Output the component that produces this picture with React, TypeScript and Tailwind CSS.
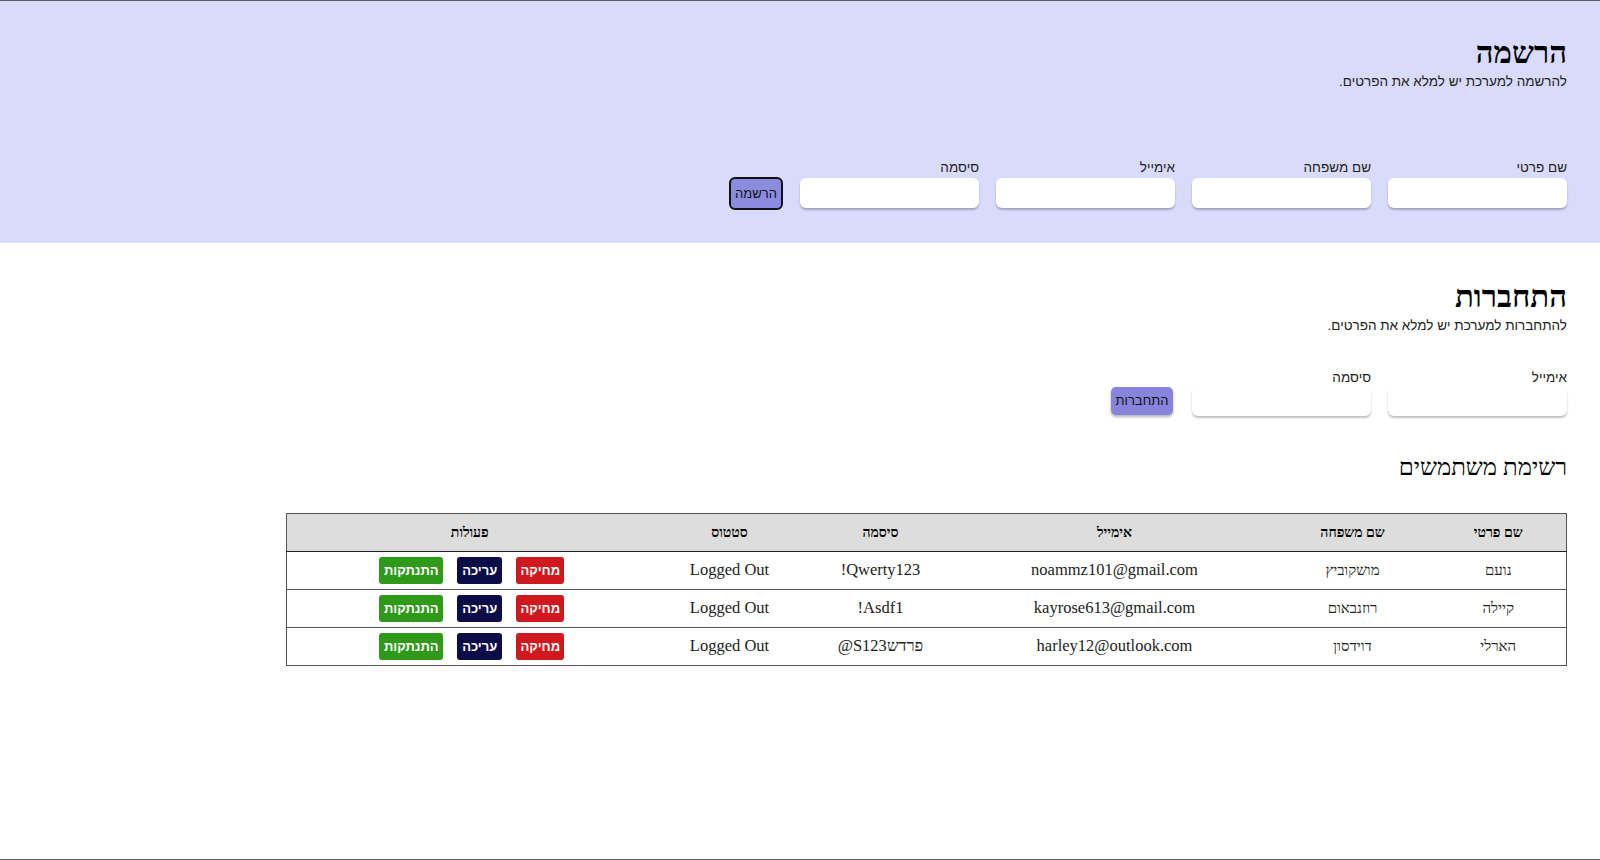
import React from "react";

const serif = "font-['Liberation_Serif','Times_New_Roman',serif]";
const sans = "font-['Liberation_Sans',Arial,sans-serif]";

function Field({ label, tight }: { label: string; tight?: boolean }) {
  return (
    <div className="flex flex-col w-[179px]">
      <label className={`${sans} text-[13.5px] leading-[16px] text-[#222] ${tight ? "mb-0" : "mb-[2px]"}`}>{label}</label>
      <input className="h-[30px] w-full rounded-[6px] bg-white shadow-[0_2px_2px_rgba(0,0,0,0.25)] outline-none border-0" />
    </div>
  );
}

const users = [
  { first: "נועם", last: "מושקוביץ", email: "noammz101@gmail.com", pass: "Qwerty123!", status: "Logged Out" },
  { first: "קיילה", last: "רוזנבאום", email: "kayrose613@gmail.com", pass: "Asdf1!", status: "Logged Out" },
  { first: "הארלי", last: "דוידסון", email: "harley12@outlook.com", pass: "פרדשS123@", status: "Logged Out" },
];

export default function App() {
  return (
    <div dir="rtl" className={`${serif} h-[860px] border-t border-b border-[#5f5f5f] bg-white text-black overflow-hidden`}>
      <section className="bg-[#d9dbfd] h-[242px] px-[33px] pt-[34px]">
        <h1 className={`${serif} text-[31px] leading-[36px] font-bold`}>הרשמה</h1>
        <p className={`${sans} text-[13.5px] leading-[18px] text-[#222] mt-[2px]`}>להרשמה למערכת יש למלא את הפרטים.</p>
        <div className="flex items-end gap-[17px] mt-[69px]">
          <Field label="שם פרטי" />
          <Field label="שם משפחה" />
          <Field label="אימייל" />
          <Field label="סיסמה" />
          <button className={`${sans} h-[33px] w-[54px] rounded-[6px] border-2 border-[#111] bg-[#8b8be0] text-[13px] text-[#111] mb-[-2px]`}>
            הרשמה
          </button>
        </div>
      </section>

      <section className="px-[33px] pt-[36px]">
        <h1 className={`${serif} text-[31px] leading-[36px] font-bold`}>התחברות</h1>
        <p className={`${sans} text-[13.5px] leading-[18px] text-[#222] mt-[2px]`}>להתחברות למערכת יש למלא את הפרטים.</p>
        <div className="flex items-end gap-[17px] mt-[35px]">
          <Field label="אימייל" tight />
          <Field label="סיסמה" tight />
          <button className={`${sans} h-[28px] w-[62px] rounded-[5px] bg-[#8884dc] text-[13px] text-[#111] shadow-[0_2px_3px_rgba(0,0,0,0.3)] mb-[1px] mr-[2px]`}>
            התחברות
          </button>
        </div>

        <h2 className={`${serif} text-[24px] leading-[28px] mt-[37px]`}>רשימת משתמשים</h2>

        <table className="table-fixed w-[1280px] mt-[32px] border border-[#555] border-collapse text-[16px]">
          <colgroup>
            <col className="w-[136px]" />
            <col className="w-[156px]" />
            <col className="w-[320px]" />
            <col className="w-[148px]" />
            <col className="w-[154px]" />
            <col className="w-[366px]" />
          </colgroup>
          <thead>
            <tr className="bg-[#dddddd] border-b border-[#222] h-[38px]">
              <th className="font-bold text-[14px]">שם פרטי</th>
              <th className="font-bold text-[14px]">שם משפחה</th>
              <th className="font-bold text-[14px]">אימייל</th>
              <th className="font-bold text-[14px]">סיסמה</th>
              <th className="font-bold text-[14px]">סטטוס</th>
              <th className="font-bold text-[14px]">פעולות</th>
            </tr>
          </thead>
          <tbody>
            {users.map((u, i) => (
              <tr key={i} className="h-[38px] border-b border-[#555] text-[#222]">
                <td className="text-center text-[15px]">{u.first}</td>
                <td className="text-center text-[15px]">{u.last}</td>
                <td className="text-center text-[16.5px]">{u.email}</td>
                <td className="text-center text-[16.5px]">{u.pass}</td>
                <td className="text-center text-[16.5px]">{u.status}</td>
                <td className="text-center">
                  <div className={`${sans} flex justify-center gap-[14px] font-bold text-[13px] text-white pl-[4px]`}>
                    <button className="h-[27px] w-[48px] rounded-[3px] bg-[#d0191e]">מחיקה</button>
                    <button className="h-[27px] w-[45px] rounded-[3px] bg-[#0c0c48]">עריכה</button>
                    <button className="h-[27px] w-[64px] rounded-[3px] bg-[#2f9a19]">התנתקות</button>
                  </div>
                </td>
              </tr>
            ))}
          </tbody>
        </table>
      </section>
    </div>
  );
}
